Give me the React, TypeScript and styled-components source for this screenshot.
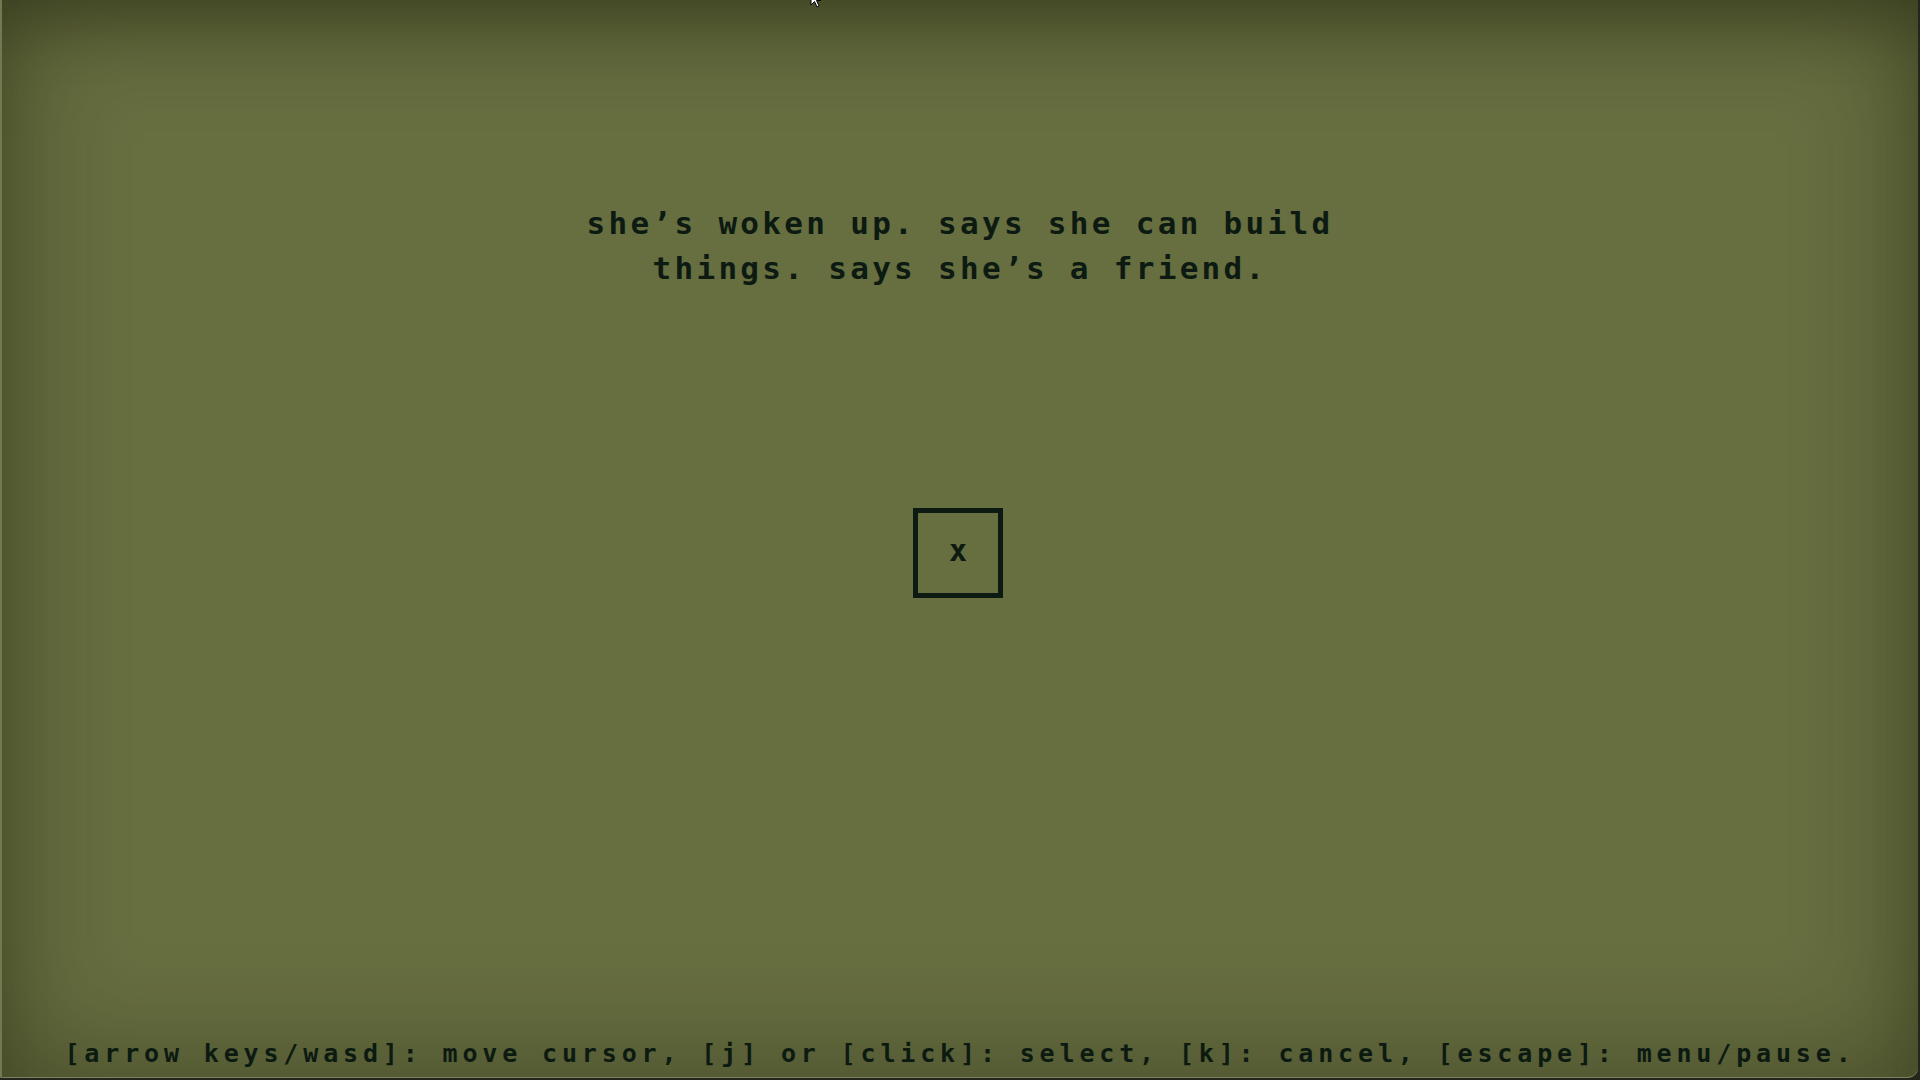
import React from "react";
import styled, { createGlobalStyle } from "styled-components";

const Global = createGlobalStyle`
  html, body {
    margin: 0;
    padding: 0;
    width: 1920px;
    height: 1080px;
    overflow: hidden;
    background: #24261c;
  }
  #root { width: 1920px; height: 1080px; }
`;

const Screen = styled.div`
  position: relative;
  box-sizing: border-box;
  width: 1918px;
  height: 1078px;
  background: #676e40;
  border-left: 2px solid #727850;
  border-bottom: 1px solid #7d8062;
  border-bottom-right-radius: 10px;
  box-shadow: inset 0 0 110px 10px rgba(28, 32, 12, 0.42),
    inset 0 40px 60px -20px rgba(28, 32, 12, 0.35);
  display: flex;
  flex-direction: column;
  align-items: center;
  font-family: "DejaVu Sans Mono", "Liberation Mono", monospace;
  font-weight: bold;
  color: #0c1a12;
  overflow: hidden;
`;

const Dialogue = styled.div`
  margin-top: 201px;
  width: 900px;
  text-align: center;
  font-size: 31px;
  line-height: 45px;
  letter-spacing: 3.3px;
  white-space: pre-line;
`;

const Middle = styled.div`
  flex: 1;
  display: flex;
  align-items: center;
  justify-content: center;
  padding-bottom: 224px;
`;

const Slot = styled.div`
  box-sizing: border-box;
  width: 90px;
  height: 90px;
  border: 5px solid #0c1a12;
  display: flex;
  align-items: center;
  justify-content: center;
  font-size: 30px;
  padding-bottom: 6px;
  margin-left: -4px;
`;

const Help = styled.div`
  margin-bottom: 8px;
  font-size: 25px;
  line-height: 30px;
  letter-spacing: 4.85px;
  white-space: nowrap;
`;

const Pointer = styled.svg`
  position: absolute;
  left: 808px;
  top: -10px;
  width: 14px;
  height: 20px;
`;

export default function App() {
  return (
    <>
      <Global />
      <Screen>
        <Pointer viewBox="0 0 14 20">
          <path
            d="M1 1 L1 15 L4.5 11.5 L7 17 L9 16 L6.5 10.5 L11 10.5 Z"
            fill="#ffffff"
            stroke="#000000"
            strokeWidth="1"
          />
        </Pointer>
        <Dialogue>
          {"she\u2019s woken up. says she can build\nthings. says she\u2019s a friend."}
        </Dialogue>
        <Middle>
          <Slot>x</Slot>
        </Middle>
        <Help>
          [arrow keys/wasd]: move cursor, [j] or [click]: select, [k]: cancel, [escape]: menu/pause.
        </Help>
      </Screen>
    </>
  );
}
